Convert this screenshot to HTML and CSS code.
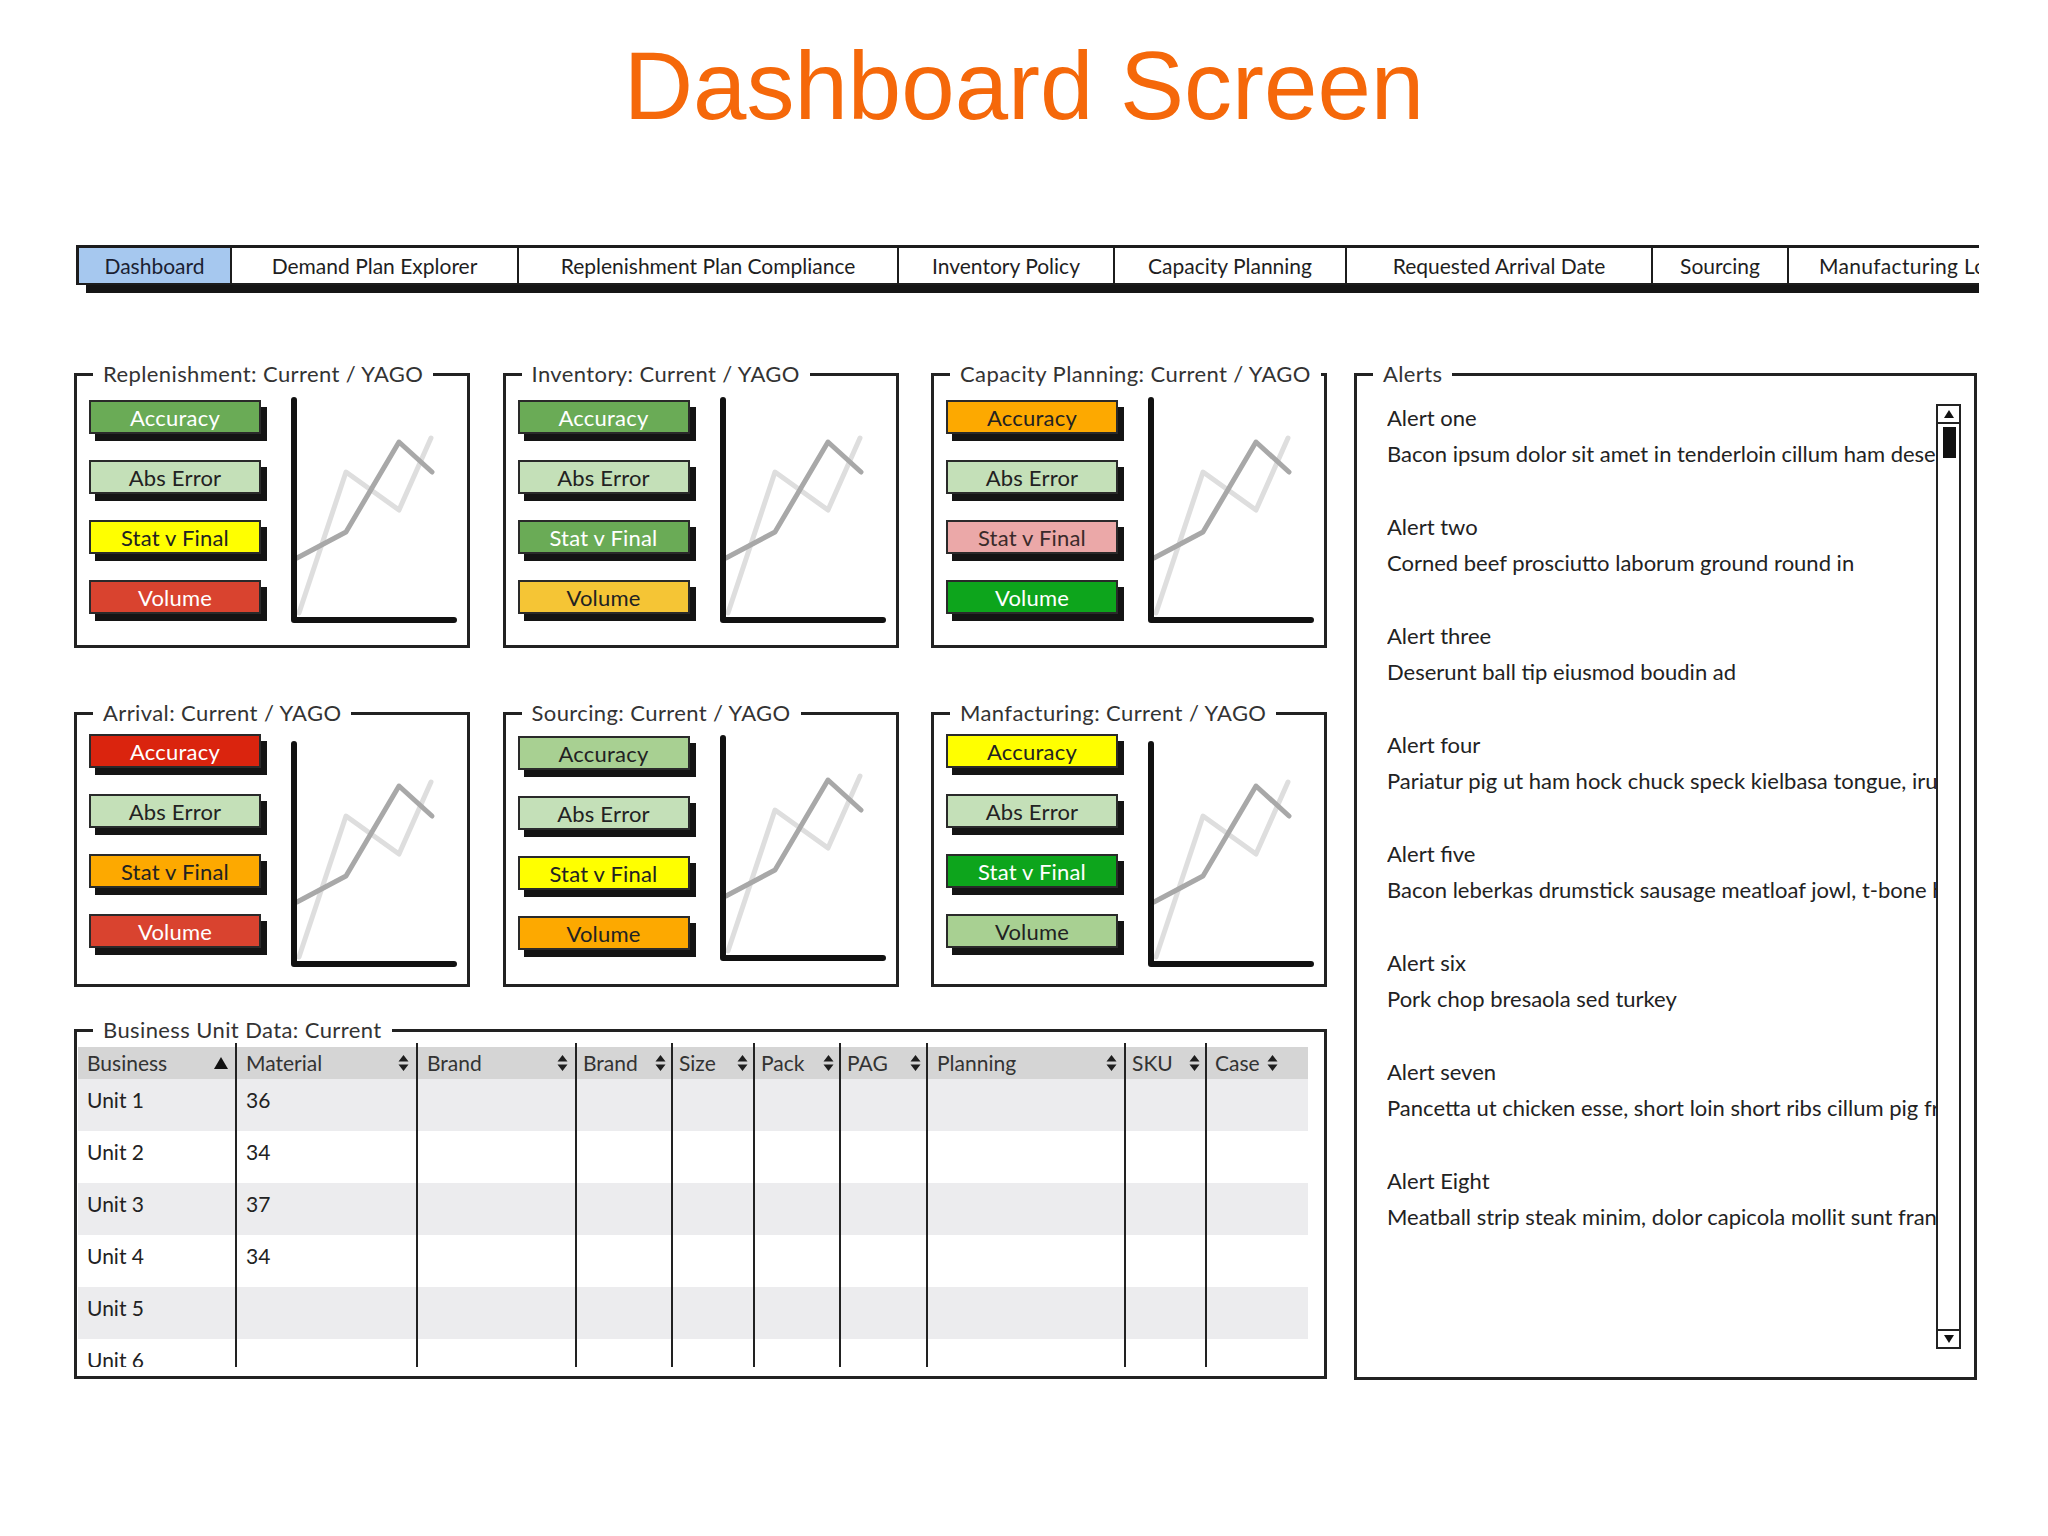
FILE: index.html
```html
<!DOCTYPE html>
<html lang="en">
<head>
<meta charset="utf-8">
<title>Dashboard Screen</title>
<link rel="stylesheet" href="styles.css">
</head>
<body>
<h1 class="title">Dashboard Screen</h1>

<nav class="tabbar">
  <div class="tabs">
    <a class="tab tab-active t-dash">Dashboard</a>
    <a class="tab t-demand">Demand Plan Explorer</a>
    <a class="tab t-repl">Replenishment Plan Compliance</a>
    <a class="tab t-inv">Inventory Policy</a>
    <a class="tab t-cap">Capacity Planning</a>
    <a class="tab t-req">Requested Arrival Date</a>
    <a class="tab t-src">Sourcing</a>
    <a class="tab t-mfg">Manufacturing Load</a>
  </div>
</nav>

<main class="main">
  <div class="left">
    <div class="panel-row">
      <fieldset class="box panel">
        <legend>Replenishment: Current / YAGO</legend>
        <div class="panel-body">
          <div class="kpis">
            <div class="kpi k-dg">Accuracy</div>
            <div class="kpi k-lg">Abs Error</div>
            <div class="kpi k-ye">Stat v Final</div>
            <div class="kpi k-rd">Volume</div>
          </div>
          <svg class="chart" viewBox="0 0 170 230" aria-hidden="true">
            <polyline class="ln-light" points="10,217 57,76 110,114 142,42"/>
            <polyline class="ln-dark" points="8,162 57,136 110,46 143,76"/>
            <path class="axis" d="M5 4 V224 H165"/>
          </svg>
        </div>
      </fieldset>
      <fieldset class="box panel">
        <legend>Inventory: Current / YAGO</legend>
        <div class="panel-body">
          <div class="kpis">
            <div class="kpi k-dg">Accuracy</div>
            <div class="kpi k-lg">Abs Error</div>
            <div class="kpi k-dg">Stat v Final</div>
            <div class="kpi k-am">Volume</div>
          </div>
          <svg class="chart" viewBox="0 0 170 230" aria-hidden="true">
            <polyline class="ln-light" points="10,217 57,76 110,114 142,42"/>
            <polyline class="ln-dark" points="8,162 57,136 110,46 143,76"/>
            <path class="axis" d="M5 4 V224 H165"/>
          </svg>
        </div>
      </fieldset>
      <fieldset class="box panel">
        <legend>Capacity Planning: Current / YAGO</legend>
        <div class="panel-body">
          <div class="kpis">
            <div class="kpi k-or">Accuracy</div>
            <div class="kpi k-lg">Abs Error</div>
            <div class="kpi k-pk">Stat v Final</div>
            <div class="kpi k-bg">Volume</div>
          </div>
          <svg class="chart" viewBox="0 0 170 230" aria-hidden="true">
            <polyline class="ln-light" points="10,217 57,76 110,114 142,42"/>
            <polyline class="ln-dark" points="8,162 57,136 110,46 143,76"/>
            <path class="axis" d="M5 4 V224 H165"/>
          </svg>
        </div>
      </fieldset>
    </div>

    <div class="panel-row">
      <fieldset class="box panel">
        <legend>Arrival: Current / YAGO</legend>
        <div class="panel-body panel-body-low">
          <div class="kpis">
            <div class="kpi k-rb">Accuracy</div>
            <div class="kpi k-lg">Abs Error</div>
            <div class="kpi k-or">Stat v Final</div>
            <div class="kpi k-rd">Volume</div>
          </div>
          <svg class="chart" viewBox="0 0 170 230" aria-hidden="true">
            <polyline class="ln-light" points="10,217 57,76 110,114 142,42"/>
            <polyline class="ln-dark" points="8,162 57,136 110,46 143,76"/>
            <path class="axis" d="M5 4 V224 H165"/>
          </svg>
        </div>
      </fieldset>
      <fieldset class="box panel">
        <legend>Sourcing: Current / YAGO</legend>
        <div class="panel-body panel-body-low panel-body-src">
          <div class="kpis">
            <div class="kpi k-mg">Accuracy</div>
            <div class="kpi k-lg">Abs Error</div>
            <div class="kpi k-ye">Stat v Final</div>
            <div class="kpi k-or">Volume</div>
          </div>
          <svg class="chart" viewBox="0 0 170 230" aria-hidden="true">
            <polyline class="ln-light" points="10,217 57,76 110,114 142,42"/>
            <polyline class="ln-dark" points="8,162 57,136 110,46 143,76"/>
            <path class="axis" d="M5 4 V224 H165"/>
          </svg>
        </div>
      </fieldset>
      <fieldset class="box panel">
        <legend>Manfacturing: Current / YAGO</legend>
        <div class="panel-body panel-body-low">
          <div class="kpis">
            <div class="kpi k-ye">Accuracy</div>
            <div class="kpi k-lg">Abs Error</div>
            <div class="kpi k-bg">Stat v Final</div>
            <div class="kpi k-mg">Volume</div>
          </div>
          <svg class="chart" viewBox="0 0 170 230" aria-hidden="true">
            <polyline class="ln-light" points="10,217 57,76 110,114 142,42"/>
            <polyline class="ln-dark" points="8,162 57,136 110,46 143,76"/>
            <path class="axis" d="M5 4 V224 H165"/>
          </svg>
        </div>
      </fieldset>
    </div>

    <fieldset class="box table-box">
      <legend>Business Unit Data: Current</legend>
      <div class="table-body">
        <div class="table-wrap">
          <table class="grid">
            <colgroup>
              <col class="c-bus"><col class="c-mat"><col class="c-brand"><col class="c-brand2"><col class="c-size">
              <col class="c-pack"><col class="c-pag"><col class="c-plan"><col class="c-sku"><col class="c-case">
            </colgroup>
            <thead>
              <tr>
                <th><span class="th-in"><span>Business</span><svg class="sort-up" viewBox="0 0 16 14"><path d="M8 1 L15 13 H1 Z"/></svg></span></th>
                <th><span class="th-in"><span>Material</span><svg class="sort" viewBox="0 0 12 20"><path d="M1 8.5 L6 2 L11 8.5 Z M1 11.5 L6 18 L11 11.5 Z"/></svg></span></th>
                <th><span class="th-in"><span>Brand</span><svg class="sort" viewBox="0 0 12 20"><path d="M1 8.5 L6 2 L11 8.5 Z M1 11.5 L6 18 L11 11.5 Z"/></svg></span></th>
                <th class="th-tight"><span class="th-in"><span>Brand</span><svg class="sort" viewBox="0 0 12 20"><path d="M1 8.5 L6 2 L11 8.5 Z M1 11.5 L6 18 L11 11.5 Z"/></svg></span></th>
                <th class="th-tight"><span class="th-in"><span>Size</span><svg class="sort" viewBox="0 0 12 20"><path d="M1 8.5 L6 2 L11 8.5 Z M1 11.5 L6 18 L11 11.5 Z"/></svg></span></th>
                <th class="th-tight"><span class="th-in"><span>Pack</span><svg class="sort" viewBox="0 0 12 20"><path d="M1 8.5 L6 2 L11 8.5 Z M1 11.5 L6 18 L11 11.5 Z"/></svg></span></th>
                <th class="th-tight"><span class="th-in"><span>PAG</span><svg class="sort" viewBox="0 0 12 20"><path d="M1 8.5 L6 2 L11 8.5 Z M1 11.5 L6 18 L11 11.5 Z"/></svg></span></th>
                <th><span class="th-in"><span>Planning</span><svg class="sort" viewBox="0 0 12 20"><path d="M1 8.5 L6 2 L11 8.5 Z M1 11.5 L6 18 L11 11.5 Z"/></svg></span></th>
                <th class="th-tight"><span class="th-in"><span>SKU</span><svg class="sort" viewBox="0 0 12 20"><path d="M1 8.5 L6 2 L11 8.5 Z M1 11.5 L6 18 L11 11.5 Z"/></svg></span></th>
                <th class="th-case"><span class="th-in th-in-left"><span>Case</span><svg class="sort" viewBox="0 0 12 20"><path d="M1 8.5 L6 2 L11 8.5 Z M1 11.5 L6 18 L11 11.5 Z"/></svg></span></th>
              </tr>
            </thead>
            <tbody>
              <tr><td>Unit 1</td><td>36</td><td></td><td></td><td></td><td></td><td></td><td></td><td></td><td></td></tr>
              <tr><td>Unit 2</td><td>34</td><td></td><td></td><td></td><td></td><td></td><td></td><td></td><td></td></tr>
              <tr><td>Unit 3</td><td>37</td><td></td><td></td><td></td><td></td><td></td><td></td><td></td><td></td></tr>
              <tr><td>Unit 4</td><td>34</td><td></td><td></td><td></td><td></td><td></td><td></td><td></td><td></td></tr>
              <tr><td>Unit 5</td><td></td><td></td><td></td><td></td><td></td><td></td><td></td><td></td><td></td></tr>
              <tr><td>Unit 6</td><td></td><td></td><td></td><td></td><td></td><td></td><td></td><td></td><td></td></tr>
            </tbody>
          </table>
        </div>
      </div>
    </fieldset>
  </div>

  <fieldset class="box alerts">
    <legend>Alerts</legend>
    <div class="alerts-body">
      <ul class="alert-list">
        <li class="alert"><div class="alert-title">Alert one</div><div class="alert-text">Bacon ipsum dolor sit amet in tenderloin cillum ham deserunt</div></li>
        <li class="alert"><div class="alert-title">Alert two</div><div class="alert-text">Corned beef prosciutto laborum ground round in</div></li>
        <li class="alert"><div class="alert-title">Alert three</div><div class="alert-text">Deserunt ball tip eiusmod boudin ad</div></li>
        <li class="alert"><div class="alert-title">Alert four</div><div class="alert-text">Pariatur pig ut ham hock chuck speck kielbasa tongue, irure</div></li>
        <li class="alert"><div class="alert-title">Alert five</div><div class="alert-text">Bacon leberkas drumstick sausage meatloaf jowl, t-bone ham</div></li>
        <li class="alert"><div class="alert-title">Alert six</div><div class="alert-text">Pork chop bresaola sed turkey</div></li>
        <li class="alert"><div class="alert-title">Alert seven</div><div class="alert-text">Pancetta ut chicken esse, short loin short ribs cillum pig frankfurter</div></li>
        <li class="alert"><div class="alert-title">Alert Eight</div><div class="alert-text">Meatball strip steak minim, dolor capicola mollit sunt frankfurter</div></li>
      </ul>
      <div class="scrollbar">
        <div class="sb-btn sb-up"><svg class="sb-arrow" viewBox="0 0 10 8"><path d="M5 0 L10 8 H0 Z"/></svg></div>
        <div class="sb-thumb"></div>
        <div class="sb-btn sb-down"><svg class="sb-arrow" viewBox="0 0 10 8"><path d="M0 0 H10 L5 8 Z"/></svg></div>
      </div>
    </div>
  </fieldset>
</main>
</body>
</html>
```
FILE: styles.css
```css
* { box-sizing: border-box; }

html, body {
  margin: 0;
  padding: 0;
  background: #ffffff;
}

body {
  width: 2048px;
  height: 1536px;
  overflow: hidden;
  font-family: Lato, "Open Sans", "Liberation Sans", sans-serif;
  color: #222222;
}

/* ---------- Title ---------- */
.title {
  margin: 38px 0 0;
  font-family: "Liberation Sans", Arial, sans-serif;
  font-weight: 400;
  font-size: 96px;
  line-height: 96px;
  color: #f5680a;
  text-align: center;
}

/* ---------- Tabs ---------- */
.tabbar {
  margin: 111px 0 0 76px;
  width: 1903px;
  height: 50px;
  overflow: hidden;
}

.tabs {
  display: flex;
  width: max-content;
  border: 3px solid #1c1c1c;
  border-bottom-width: 2px;
  box-shadow: 10px 8px 0 #151515;
  background: #ffffff;
}

.tab {
  flex: none;
  height: 35px;
  display: flex;
  align-items: center;
  justify-content: center;
  border-left: 2px solid #1c1c1c;
  font-size: 21px;
  color: #1e1e1e;
  white-space: nowrap;
}

.tab:first-child { border-left: none; }
.tab-active { background: #a6c8ef; color: #1b1f33; }

.t-dash { width: 151px; }
.t-demand { width: 287px; }
.t-repl { width: 380px; }
.t-inv { width: 216px; }
.t-cap { width: 232px; }
.t-req { width: 306px; }
.t-src { width: 136px; }
.t-mfg { width: 280px; justify-content: flex-start; padding-left: 30px; letter-spacing: 0.3px; }

/* ---------- Main grid ---------- */
.main {
  display: grid;
  grid-template-columns: 1253px 623px;
  column-gap: 27px;
  margin: 66px 0 0 74px;
}

.left {
  display: flex;
  flex-direction: column;
}

.panel-row {
  display: flex;
  justify-content: space-between;
}

.panel-row + .panel-row { margin-top: 52px; }

/* ---------- Sketch boxes (fieldset + legend) ---------- */
.box {
  margin: 0;
  padding: 0;
  min-width: 0;
  border: 3px solid #222222;
}

.box > legend {
  margin-left: 16px;
  padding: 0 10px;
  font-size: 22px;
  line-height: 26px;
  letter-spacing: 0.4px;
  white-space: nowrap;
  color: #333333;
}

/* ---------- KPI panels ---------- */
.panel { width: 396px; }

.panel-body {
  display: flex;
  align-items: flex-start;
  height: 258px;
  padding: 13px 0 0 12px;
}

.panel-body-low { padding-top: 8px; }
.panel-body-src { padding-top: 10px; }

.kpis {
  flex: none;
  width: 172px;
  display: flex;
  flex-direction: column;
  gap: 26px;
}

.kpi {
  height: 34px;
  border: 2px solid #2a2a2a;
  box-shadow: 6px 7px 0 #141414;
  display: flex;
  align-items: center;
  justify-content: center;
  font-size: 22px;
  letter-spacing: 0.2px;
  color: #222222;
}

.k-dg { background: #6aab56; color: #ffffff; }
.k-lg { background: #c4e0b8; }
.k-mg { background: #a8d092; }
.k-ye { background: #ffff00; }
.k-rd { background: #d9432f; color: #ffffff; }
.k-rb { background: #da240e; color: #ffffff; }
.k-am { background: #f5c535; }
.k-or { background: #fda900; }
.k-pk { background: #eba8a8; color: #3a2a2a; }
.k-bg { background: #0da51c; color: #ffffff; }

.chart {
  flex: none;
  width: 170px;
  height: 230px;
  margin: -4px 0 0 28px;
}

.panel-body-low .chart { margin-top: 6px; }
.panel-body-src .chart { margin-top: -2px; }

.ln-light, .ln-dark, .axis {
  fill: none;
  stroke-linecap: round;
  stroke-linejoin: round;
}

.ln-light { stroke: #dedede; stroke-width: 5; }
.ln-dark { stroke: #a8a8a8; stroke-width: 5; }
.axis { stroke: #111111; stroke-width: 6; }

/* ---------- Business unit table ---------- */
.table-box { margin-top: 30px; }

.table-body { padding: 0 0 9px 1px; }

.table-wrap {
  height: 324px;
  overflow: hidden;
}

.grid {
  border-collapse: collapse;
  table-layout: fixed;
  width: 1230px;
}

.c-bus { width: 158px; }
.c-mat { width: 181px; }
.c-brand { width: 159px; }
.c-brand2 { width: 96px; }
.c-size { width: 82px; }
.c-pack { width: 86px; }
.c-pag { width: 87px; }
.c-plan { width: 198px; }
.c-sku { width: 81px; }
.c-case { width: 102px; }

.grid th {
  height: 36px;
  padding: 4px 6px 0 9px;
  background: linear-gradient(to bottom, transparent 4px, #d5d5d5 4px);
  text-align: left;
  font-weight: 400;
  font-size: 21px;
  line-height: 26px;
  color: #333333;
  vertical-align: middle;
}

.grid .th-tight { padding-left: 6px; padding-right: 4px; }
.grid .th-case { padding-left: 8px; }

.th-in {
  display: flex;
  align-items: center;
  justify-content: space-between;
  white-space: nowrap;
}

.th-in-left { justify-content: flex-start; gap: 6px; }

.sort { width: 13px; height: 20px; fill: #1e1e1e; flex: none; }
.sort-up { width: 16px; height: 14px; fill: #111111; flex: none; }

.grid th + th,
.grid td + td {
  border-left: 2px solid #222222;
}

.grid td {
  height: 52px;
  padding: 0 9px 12px;
  font-size: 21px;
  color: #222222;
  vertical-align: middle;
}

.grid tbody tr:nth-child(odd) td { background: #ececee; }

/* ---------- Alerts ---------- */
.alerts-body {
  display: flex;
  height: 990px;
  padding: 0 13px 0 30px;
}

.alert-list {
  flex: 1;
  min-width: 0;
  margin: 0;
  padding: 13px 0 0;
  list-style: none;
  overflow: hidden;
  white-space: nowrap;
  font-size: 22px;
  color: #222222;
}

.alert { margin-bottom: 37px; }
.alert-title, .alert-text { line-height: 36px; }

.scrollbar {
  flex: none;
  width: 25px;
  height: 945px;
  margin-top: 17px;
  border: 2px solid #222222;
  display: flex;
  flex-direction: column;
}

.sb-btn {
  height: 18px;
  display: flex;
  align-items: center;
  justify-content: center;
}

.sb-up { border-bottom: 2px solid #222222; }
.sb-down { border-top: 2px solid #222222; margin-top: auto; }

.sb-arrow { width: 10px; height: 8px; fill: #111111; }

.sb-thumb {
  height: 31px;
  margin: 3px 3px 0 5px;
  background: #111111;
}
```
